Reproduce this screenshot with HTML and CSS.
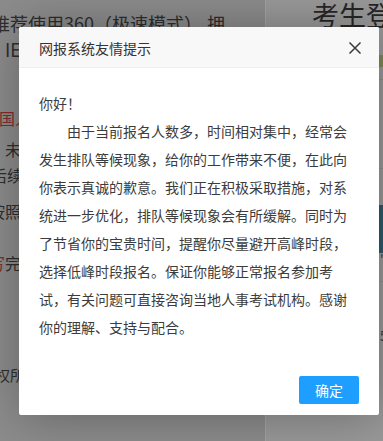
FILE: index.html
```html
<!DOCTYPE html>
<html lang="zh-CN">
<head>
  <meta charset="UTF-8">
  <meta name="viewport" content="width=device-width, initial-scale=1.0">
  <title>考生登录</title>
  <link rel="stylesheet" href="styles.css">
</head>
<body>

  <div class="page">
    <div class="page-left">
      <div class="tip">推荐使用360（极速模式）<span class="tip-gap">押</span></div>
      <div class="tip-sub">IE浏览器</div>
      <div class="notice notice-1"><span class="red">全国人事考试</span></div>
      <div class="notice notice-2">未注册的考生</div>
      <div class="notice notice-3">后续报名流程</div>
      <div class="notice notice-4">按照要求填写</div>
      <div class="notice notice-5"><span class="red">写</span>完成后</div>
      <div class="copy">版权所有</div>
    </div>
    <div class="page-right">
      <h1>考生登录</h1>
      <div class="form">
        <div class="captcha"></div>
        <div class="field"></div>
        <div class="field field-tall"></div>
        <div class="login-btn"></div>
        <div class="link">'</div>
        <div class="field"></div>
        <div class="link">5</div>
      </div>
    </div>
  </div>

  <div class="layer">
    <div class="layer-title">
      网报系统友情提示
      <span class="layer-close">
        <svg width="14" height="14" viewBox="0 0 14 14">
          <path d="M1.5 1.5 L12.5 12.5 M12.5 1.5 L1.5 12.5" stroke="#3a3a3a" stroke-width="1.5" fill="none"/>
        </svg>
      </span>
    </div>
    <div class="layer-content">
      你好！<br>
      <span class="indent"></span>由于当前报名人数多，时间相对集中，经常会<br>
      发生排队等候现象，给你的工作带来不便，在此向<br>
      你表示真诚的歉意。我们正在积极采取措施，对系<br>
      统进一步优化，排队等候现象会有所缓解。同时为<br>
      了节省你的宝贵时间，提醒你尽量避开高峰时段，<br>
      选择低峰时段报名。保证你能够正常报名参加考<br>
      试，有关问题可直接咨询当地人事考试机构。感谢<br>
      你的理解、支持与配合。
    </div>
    <div class="layer-btn">
      <a href="#" class="btn-ok">确定</a>
    </div>
  </div>

</body>
</html>
```

FILE: styles.css
```css
body {
  margin: 0;
  height: 441px;
  overflow: hidden;
  font-family: "Noto Sans CJK SC", "Liberation Sans", sans-serif;
  background: #878787;
}

.page {
  display: grid;
  grid-template-columns: 265px 1fr;
  height: 441px;
}

.page-left {
  margin-left: -20px;
  background: #8c8c8c;
  color: #2e2e2e;
  white-space: nowrap;
}

.tip {
  font-size: 18px;
  line-height: 26px;
  padding: 10px 0 0 12px;
}

.tip-gap {
  margin-left: 5px;
}

.tip-sub {
  font-size: 18px;
  line-height: 26px;
  padding-left: 25px;
}

.notice {
  font-size: 16px;
  line-height: 26px;
}

.red {
  color: #8a2a28;
}

.notice-1 { margin-top: 43px; padding-left: 3px; }
.notice-2 { margin-top: 5px; padding-left: 25px; }
.notice-3 { padding-left: 11px; }
.notice-4 { margin-top: 10px; padding-left: 9px; }
.notice-5 { margin-top: 26px; padding-left: 9px; }

.copy {
  margin-top: 86px;
  font-size: 15px;
  line-height: 26px;
}

.page-right {
  background: #999999;
  border-left: 1px solid #a3a3a3;
  white-space: nowrap;
}

.page-right h1 {
  margin: 0;
  padding-left: 46px;
  font-size: 27px;
  font-weight: normal;
  line-height: 30px;
  color: #262626;
}

.form {
  padding-left: 40px;
}

.captcha {
  margin-top: 25px;
  margin-left: 70px;
  width: 20px;
  height: 12px;
  background: #7e8a55;
}

.field {
  height: 12px;
  border-bottom: 1px solid #8e8e8e;
}

.field-tall {
  height: 88px;
}

.login-btn {
  margin-top: 36px;
  height: 48px;
  background: #2c5a6c;
}

.link {
  font-size: 13px;
  line-height: 16px;
  padding-left: 74px;
  color: #3a3a3a;
}

.field + .link {
  margin-top: 46px;
}

.layer {
  position: absolute;
  left: 19px;
  top: 27px;
  width: 360px;
  height: 388px;
  background: #fff;
  border-radius: 2px;
  box-shadow: 1px 1px 50px rgba(0, 0, 0, 0.3);
  display: flex;
  flex-direction: column;
}

.layer-title {
  display: flex;
  justify-content: space-between;
  align-items: center;
  box-sizing: border-box;
  height: 41px;
  padding: 2px 17px 0 20px;
  background: #f8f8f8;
  border-bottom: 1px solid #eeeeee;
  border-radius: 2px 2px 0 0;
  font-size: 14px;
  color: #333;
}

.layer-close {
  display: flex;
}

.layer-content {
  padding: 21px 20px 0 20px;
  font-size: 14px;
  line-height: 28px;
  color: #3c3c3c;
  white-space: nowrap;
}

.indent {
  display: inline-block;
  width: 28px;
}

.layer-btn {
  margin-top: auto;
  display: flex;
  justify-content: flex-end;
  padding: 0 20px 11px;
}

.btn-ok {
  height: 28px;
  line-height: 28px;
  padding: 0 16px;
  background: #1e9fff;
  border-radius: 2px;
  color: #fff;
  font-size: 14px;
  text-decoration: none;
}
```
